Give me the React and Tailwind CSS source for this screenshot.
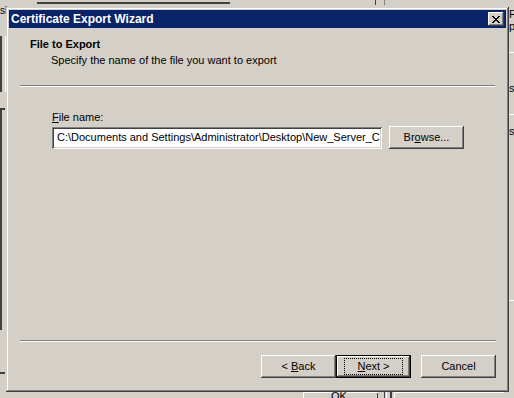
import React from "react";

const font = { fontFamily: '"Liberation Sans", Arial, sans-serif' };

function Btn({ children, def, className = "" }) {
  return (
    <div
      className={
        "flex items-center justify-center w-[75px] h-[23px] bg-[#d4d0c8] text-[11px] text-black " +
        (def
          ? "border border-black shadow-[inset_-1px_-1px_#404040,inset_1px_1px_#fff,inset_-2px_-2px_#808080] "
          : "shadow-[inset_-1px_-1px_#404040,inset_1px_1px_#fff,inset_-2px_-2px_#808080] ") +
        className
      }
    >
      {def ? (
        <span className="px-[12px] py-[1px] border border-dotted border-black leading-[13px]">{children}</span>
      ) : (
        <span className="leading-[13px]">{children}</span>
      )}
    </div>
  );
}

export default function App() {
  return (
    <div className="relative w-[514px] h-[398px] overflow-hidden bg-[#d4d0c8]" style={font}>
      {/* background desktop windows */}
      <div className="absolute left-[37px] top-[2px] w-[193px] h-[2px] bg-[#404040]" />
      <div className="absolute left-[0px] top-[6px] text-[10px] leading-[10px] text-black">sh</div>
      <div className="absolute left-[375px] top-[0px] w-[1px] h-[5px] bg-[#404040]" />
      <div className="absolute left-[384px] top-[0px] w-[1px] h-[5px] bg-[#808080]" />
      <div className="absolute left-[0px] top-[36px] w-[2px] h-[56px] bg-[#404040]" />
      <div className="absolute left-[5px] top-[36px] w-[1px] h-[56px] bg-white" />
      <div className="absolute left-[0px] top-[108px] w-[5px] h-[2px] bg-[#404040]" />
      <div className="absolute left-[0px] top-[110px] w-[2px] h-[220px] bg-[#404040]" />
      <div className="absolute left-[0px] top-[372px] w-[5px] h-[2px] bg-[#404040]" />
      <div className="absolute left-[509px] top-[8px] text-[11px] leading-[13px] text-black">Fi</div>
      <div className="absolute left-[509px] top-[20px] text-[11px] leading-[13px] text-black">p</div>
      <div className="absolute left-[509px] top-[82px] text-[11px] leading-[13px] text-black">s.</div>
      <div className="absolute left-[509px] top-[125px] text-[11px] leading-[13px] text-black">si</div>
      <div className="absolute left-[509px] top-[52px] w-[5px] h-[1px] bg-white" />
      <div className="absolute left-[509px] top-[114px] w-[5px] h-[1px] bg-white" />
      <div className="absolute left-[509px] top-[300px] w-[5px] h-[1px] bg-white" />
      <div className="absolute left-[303px] top-[392px] w-[75px] h-[10px] shadow-[inset_1px_1px_#fff,inset_-1px_-1px_#404040]" />
      <div className="absolute left-[331px] top-[390px] text-[11px] leading-[13px] text-black">OK</div>
      <div className="absolute left-[384px] top-[392px] w-[6px] h-[10px] shadow-[inset_1px_0_#404040]" />
      <div className="absolute left-[386px] top-[392px] w-[1px] h-[10px] bg-white" />
      <div className="absolute left-[390px] top-[392px] w-[2px] h-[10px] bg-[#404040]" />
      <div className="absolute left-[394px] top-[392px] w-[110px] h-[10px] shadow-[inset_1px_1px_#fff]" />

      {/* dialog */}
      <div className="absolute left-[6px] top-[7px] w-[503px] h-[385px] bg-[#d4d0c8] p-[3px] flex flex-col shadow-[inset_-1px_-1px_#404040,inset_1px_1px_#d4d0c8,inset_-2px_-2px_#808080,inset_2px_2px_#fff]">
        {/* title bar */}
        <div className="h-[18px] bg-[#0a246a] flex items-center justify-between pl-[2px] pr-[2px]">
          <span className="text-white font-bold text-[12px] leading-[14px]">Certificate Export Wizard</span>
          <div className="w-[16px] h-[14px] bg-[#d4d0c8] flex items-center justify-center shadow-[inset_-1px_-1px_#404040,inset_1px_1px_#fff,inset_-2px_-2px_#808080]">
            <svg width="8" height="7" viewBox="0 0 8 7" shapeRendering="crispEdges">
              <path d="M0 0h2v1h-2zM6 0h2v1h-2zM1 1h2v1h-2zM5 1h2v1h-2zM2 2h4v1h-4zM3 3h2v1h-2zM2 4h4v1h-4zM1 5h2v1h-2zM5 5h2v1h-2zM0 6h2v1h-2zM6 6h2v1h-2z" fill="#000" />
            </svg>
          </div>
        </div>

        {/* header */}
        <div className="pl-[21px] pt-[10px] text-[11px] leading-[13px] text-black">
          <div className="font-bold">File to Export</div>
          <div className="pl-[21px] mt-[3px]">Specify the name of the file you want to export</div>
        </div>
        <div className="ml-[11px] mr-[11px] mt-[18px] h-[2px] border-t border-t-[#808080] border-b border-b-white" />

        {/* body */}
        <div className="flex-1 pl-[43px] pt-[24px] text-[11px] leading-[13px] text-black">
          <div>
            <span className="underline">F</span>ile name:
          </div>
          <div className="mt-[2px] flex items-center gap-[7px]">
            <div className="w-[330px] h-[22px] bg-white flex items-center pl-[5px] shadow-[inset_1px_1px_#808080,inset_-1px_-1px_#fff,inset_2px_2px_#404040,inset_-2px_-2px_#d4d0c8] whitespace-nowrap overflow-hidden">
              C:\Documents and Settings\Administrator\Desktop\New_Server_C
            </div>
            <Btn className="h-[22px]">
              Br<span className="underline">o</span>wse...
            </Btn>
          </div>
        </div>

        <div className="ml-[11px] mr-[10px] h-[2px] border-t border-t-[#808080] border-b border-b-white" />
        <div className="flex justify-end pr-[10px] pt-[13px] pb-[11px]">
          <Btn>
            &lt; <span className="underline">B</span>ack
          </Btn>
          <Btn def>
            <span className="underline">N</span>ext &gt;
          </Btn>
          <div className="w-[10px]" />
          <Btn>Cancel</Btn>
        </div>
      </div>
    </div>
  );
}
